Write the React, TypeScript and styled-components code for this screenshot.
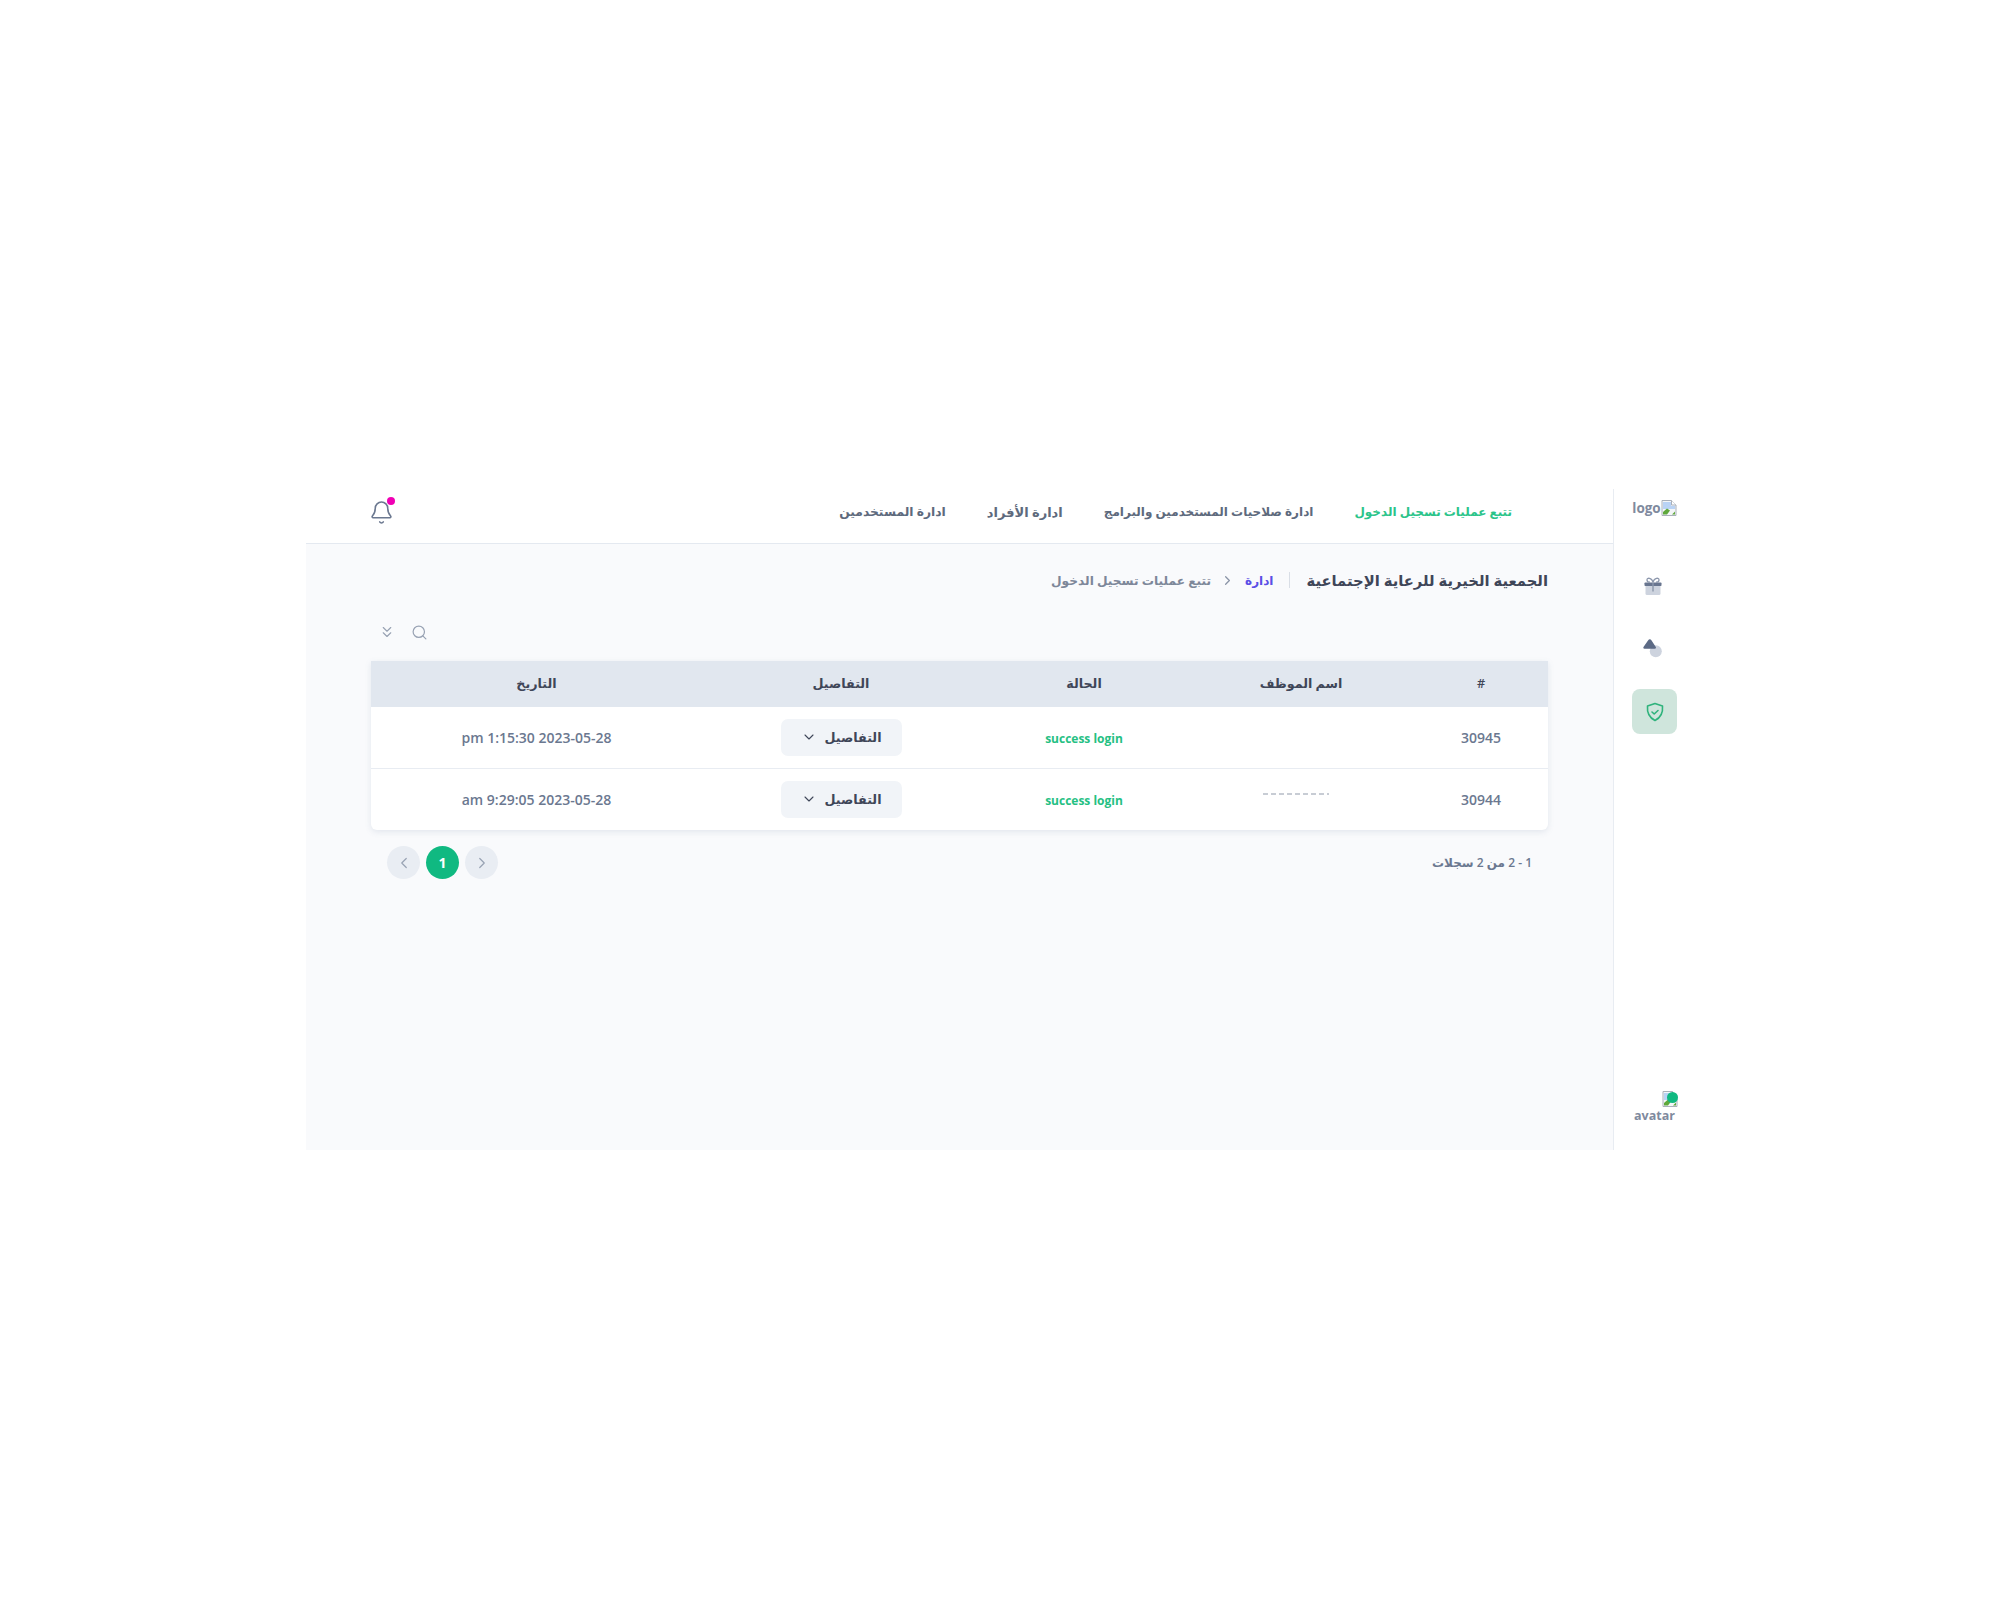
import { Bell, ChevronDown, ChevronLeft, ChevronRight, ChevronsDown, Search } from "lucide-react";
import styled, { createGlobalStyle } from "styled-components";

const navItems = [
  { label: "تتبع عمليات تسجيل الدخول", size: 12, active: true },
  { label: "ادارة صلاحيات المستخدمين والبرامج", size: 12 },
  { label: "ادارة الأفراد", size: 13 },
  { label: "ادارة المستخدمين", size: 12.3 },
];

const columns = [
  { title: "#", width: 134 },
  { title: "اسم الموظف", width: 226 },
  { title: "الحالة", width: 208 },
  { title: "التفاصيل", width: 278 },
  { title: "التاريخ", width: 331 },
];

const rows = [
  { id: "30945", date: "2023-05-28 1:15:30 pm", smear: false },
  { id: "30944", date: "2023-05-28 9:29:05 am", smear: true },
];

const BrokenImage = () => (
  <svg width="16" height="16" viewBox="0 0 16 16">
    <path d="M1 0.5h9.5l4.5 4.5v10.5h-14z" fill="#f4f6f8" stroke="#a9b0ba" strokeWidth="1" />
    <path d="M2 2h8v4h4v3H2z" fill="#b9d3f5" />
    <path d="M2 14.5v-2.5l4-3.5 3 2-3 4z" fill="#5fa83c" />
    <path d="M11 14.5l3-3v3z" fill="#5fa83c" />
    <path d="M10.5 0.5v4.500h4.500" fill="#fff" stroke="#a9b0ba" strokeWidth="1" />
  </svg>
);

const GiftIcon = () => (
  <svg width="18" height="18" viewBox="0 0 18 18">
    <rect x="1.500" y="7" width="15" height="11" rx="1.500" fill="#cdd3de" />
    <rect x="0.500" y="5.500" width="17" height="3.500" rx="0.800" fill="#68758f" />
    <rect x="8.300" y="5.500" width="1.400" height="9" fill="#8c97ac" />
    <path d="M9 5C7.500 0.500 3 0.300 3 3c0 1.500 1.500 2.200 3 2.200M9 5c1.500-4.500 6-4.700 6-2 0 1.500-1.500 2.200-3 2.200" fill="none" stroke="#8c97ac" strokeWidth="1.300" />
  </svg>
);

const ShapesIcon = () => (
  <svg width="20" height="20" viewBox="0 0 20 20">
    <circle cx="12.800" cy="13.300" r="6" fill="#cdd3de" />
    <path d="M6.800 1.200c.7 0 1.200.4 1.600 1l4.400 6.800c.5.900 0 1.700-1 1.700H1.500c-1 0-1.500-.8-1-1.700l4.700-6.800c.4-.6 1-1 1.600-1z" fill="#5c6a85" />
  </svg>
);

const ShieldIcon = () => (
  <svg width="20" height="20" viewBox="0 0 20 20" fill="none" stroke="#2fb37c" strokeWidth="1.600" strokeLinecap="round" strokeLinejoin="round">
    <path d="M10 1.500l7.500 2.500c.6 6.500-1.500 11.500-7.500 14.500C4 15.500 1.900 10.500 2.500 4z" />
    <path d="M7 10l2.200 2 3.800-3.500" />
  </svg>
);

const App = () => {
  return (
    <Page>
      <GlobalStyle />
      <Shell dir="rtl">
        <Sidebar>
          <Logo>
            <BrokenImage />
            <span>logo</span>
          </Logo>
          <SideIcons>
            <SideButton>
              <GiftIcon />
            </SideButton>
            <SideButton>
              <ShapesIcon />
            </SideButton>
            <SideButton $active>
              <ShieldIcon />
            </SideButton>
          </SideIcons>
          <AvatarBox>
            <AvatarPic>
              <BrokenImage />
              <OnlineDot />
            </AvatarPic>
            <span>avatar</span>
          </AvatarBox>
        </Sidebar>
        <Main>
          <TopBar>
            <NavList>
              {navItems.map((item) => (
                <NavItem key={item.label} $active={item.active} $size={item.size}>
                  {item.label}
                </NavItem>
              ))}
            </NavList>
            <BellWrap>
              <Bell size={25} strokeWidth={1.500} />
              <BellDot />
            </BellWrap>
          </TopBar>
          <Content>
            <Breadcrumb>
              <PageTitle>الجمعية الخيرية للرعاية الإجتماعية</PageTitle>
              <CrumbDivider />
              <CrumbLink>ادارة</CrumbLink>
              <ChevronRight size={15} strokeWidth={2} color="#8a94a6" />
              <CrumbCurrent>تتبع عمليات تسجيل الدخول</CrumbCurrent>
            </Breadcrumb>
            <Toolbar>
              <Search size={17} strokeWidth={1.700} />
              <ChevronsDown size={18} strokeWidth={1.500} />
            </Toolbar>
            <TableCard>
              <LogTable>
                <colgroup>
                  {columns.map((c) => (
                    <col key={c.title} width={c.width} />
                  ))}
                </colgroup>
                <thead>
                  <tr>
                    {columns.map((c) => (
                      <HeadCell key={c.title}>{c.title}</HeadCell>
                    ))}
                  </tr>
                </thead>
                <tbody>
                  {rows.map((row) => (
                    <BodyRow key={row.id}>
                      <BodyCell>{row.id}</BodyCell>
                      <BodyCell>{row.smear && <Smear />}</BodyCell>
                      <BodyCell>
                        <StatusText>success login</StatusText>
                      </BodyCell>
                      <BodyCell>
                        <DetailsButton>
                          التفاصيل
                          <ChevronDown size={16} strokeWidth={1.600} />
                        </DetailsButton>
                      </BodyCell>
                      <BodyCell>{row.date}</BodyCell>
                    </BodyRow>
                  ))}
                </tbody>
              </LogTable>
            </TableCard>
            <Footer>
              <RecordCount>1 - 2 من 2 سجلات</RecordCount>
              <Pager>
                <PageButton>
                  <ChevronRight size={18} strokeWidth={1.600} />
                </PageButton>
                <PageButton $active>1</PageButton>
                <PageButton>
                  <ChevronLeft size={18} strokeWidth={1.600} />
                </PageButton>
              </Pager>
            </Footer>
          </Content>
        </Main>
      </Shell>
    </Page>
  );
};

const GlobalStyle = createGlobalStyle`
  html, body {
    margin: 0;
    padding: 0;
    background: #fff;
  }
  * {
    box-sizing: border-box;
  }
`;

const Page = styled.div`
  padding: 489px 305px 450px 306px;
  font-family: "Open Sans", "DejaVu Sans", sans-serif;
`;

const Shell = styled.div`
  display: flex;
  width: 1389px;
  height: 661px;
`;

const Sidebar = styled.aside`
  width: 82px;
  flex-shrink: 0;
  display: flex;
  flex-direction: column;
  align-items: center;
  padding: 11px 0 25px;
  background: #fff;
  border-left: 1px solid #e8ecf2;
`;

const Logo = styled.div`
  display: flex;
  align-items: center;
  height: 16px;
  font-size: 13.5px;
  font-weight: 700;
  color: #7f8a9e;
`;

const SideIcons = styled.div`
  display: flex;
  flex-direction: column;
  gap: 17px;
  margin-top: 49px;
`;

const SideButton = styled.div<{ $active?: boolean }>`
  width: 45px;
  height: 45px;
  display: flex;
  align-items: center;
  justify-content: center;
  padding: ${(p) => (p.$active ? "0" : "0 4px 4px 0")};
  border-radius: 8px;
  background: ${(p) => (p.$active ? "#cfe5dc" : "transparent")};
`;

const AvatarBox = styled.div`
  margin-top: auto;
  display: flex;
  flex-direction: column;
  align-items: center;
  font-size: 12.5px;
  font-weight: 700;
  line-height: 18px;
  color: #7f8a9e;
`;

const AvatarPic = styled.div`
  position: relative;
  width: 46px;
  height: 16px;
`;

const OnlineDot = styled.span`
  position: absolute;
  top: 1px;
  right: 0;
  width: 11px;
  height: 11px;
  border-radius: 50%;
  background: #10b981;
`;

const Main = styled.main`
  flex: 1;
  min-width: 0;
  display: flex;
  flex-direction: column;
  background: #f9fafc;
`;

const TopBar = styled.header`
  height: 55px;
  flex-shrink: 0;
  display: flex;
  align-items: center;
  justify-content: space-between;
  padding: 0 101px 8px 63px;
  background: #fff;
  border-bottom: 1px solid #e4e9f0;
`;

const NavList = styled.nav`
  display: flex;
  gap: 41px;
`;

const NavItem = styled.span<{ $active?: boolean; $size: number }>`
  font-size: ${(p) => p.$size}px;
  font-weight: 600;
  color: ${(p) => (p.$active ? "#2bc48a" : "#5e6a7d")};
`;

const BellWrap = styled.div`
  position: relative;
  display: flex;
  color: #6b7890;
`;

const BellDot = styled.span`
  position: absolute;
  top: -3px;
  left: 18px;
  width: 8px;
  height: 8px;
  border-radius: 50%;
  background: #f000b4;
`;

const Content = styled.div`
  padding: 25px 65px 0;
`;

const Breadcrumb = styled.div`
  display: flex;
  align-items: center;
  height: 22px;
`;

const PageTitle = styled.h1`
  margin: 0;
  font-size: 14.8px;
  font-weight: 600;
  color: #3f4658;
`;

const CrumbDivider = styled.span`
  width: 1px;
  height: 16px;
  margin: 0 16px;
  background: #d9dee6;
`;

const CrumbLink = styled.span`
  margin-left: 10px;
  font-size: 12px;
  font-weight: 600;
  color: #5b4fe6;
`;

const CrumbCurrent = styled.span`
  margin-right: 9px;
  font-size: 12.2px;
  font-weight: 600;
  color: #7d8799;
`;

const Toolbar = styled.div`
  display: flex;
  justify-content: flex-end;
  align-items: center;
  gap: 15px;
  height: 16px;
  margin-top: 33px;
  padding-left: 7px;
  color: #98a2b3;
`;

const TableCard = styled.div`
  margin-top: 21px;
  border-radius: 0 0 6px 6px;
  overflow: hidden;
  background: #fff;
  box-shadow: 0 2px 6px rgba(90, 110, 150, 0.14);
`;

const LogTable = styled.table`
  width: 100%;
  table-layout: fixed;
  border-collapse: collapse;
`;

const HeadCell = styled.th`
  height: 46px;
  padding: 0 0 2px;
  background: #e1e7ef;
  font-size: 12.7px;
  font-weight: 600;
  text-align: center;
  color: #3f4658;
`;

const BodyRow = styled.tr`
  height: 61px;
  & + & {
    height: 62px;
    border-top: 1px solid #e8ecf2;
  }
`;

const BodyCell = styled.td`
  padding: 0;
  font-size: 14px;
  font-weight: 600;
  text-align: center;
  color: #6b7890;
`;

const StatusText = styled.span`
  font-size: 12px;
  font-weight: 700;
  color: #25c083;
`;

const Smear = styled.span`
  display: block;
  width: 66px;
  height: 2px;
  margin: -6px 85px 0 auto;
  opacity: 0.6;
  background: repeating-linear-gradient(90deg, #a3abb8 0 5px, transparent 5px 8px);
`;

const DetailsButton = styled.button`
  display: inline-flex;
  align-items: center;
  justify-content: center;
  gap: 8px;
  width: 121px;
  height: 37px;
  border: 0;
  border-radius: 7px;
  background: #f1f4f8;
  font-family: inherit;
  font-size: 12.7px;
  font-weight: 600;
  color: #3f4658;
`;

const Footer = styled.div`
  display: flex;
  align-items: center;
  justify-content: space-between;
  margin-top: 16px;
  padding: 0 16px;
`;

const RecordCount = styled.span`
  font-size: 12px;
  font-weight: 600;
  color: #6b7890;
`;

const Pager = styled.div`
  display: flex;
  gap: 6px;
`;

const PageButton = styled.div<{ $active?: boolean }>`
  width: 33px;
  height: 33px;
  display: flex;
  align-items: center;
  justify-content: center;
  border-radius: 50%;
  font-size: 14px;
  font-weight: 700;
  background: ${(p) => (p.$active ? "#10b981" : "#e9edf3")};
  color: ${(p) => (p.$active ? "#fff" : "#98a2b3")};
`;

export default App;
